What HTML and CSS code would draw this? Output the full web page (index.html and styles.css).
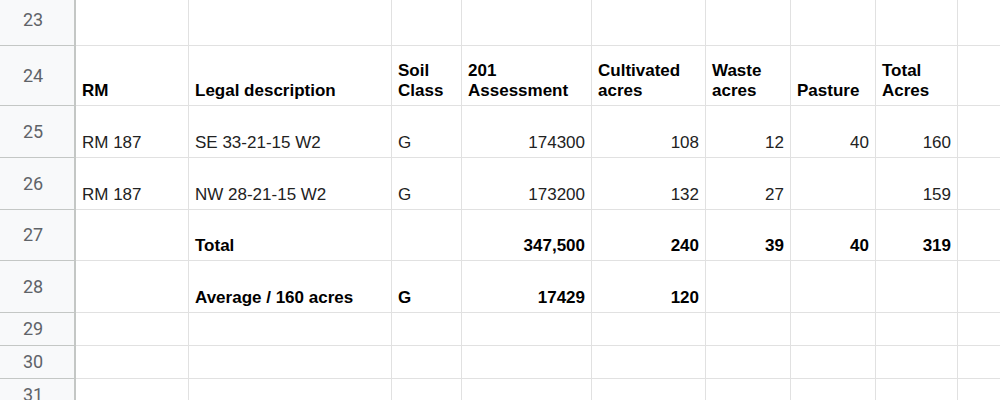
FILE: index.html
```html
<!DOCTYPE html>
<html lang="en">
<head>
<meta charset="utf-8">
<title>Sheet</title>
<link rel="stylesheet" href="styles.css">
</head>
<body>
<div class="sheet">
  <div class="rh">23</div><div class="c"></div><div class="c"></div><div class="c"></div><div class="c"></div><div class="c"></div><div class="c"></div><div class="c"></div><div class="c"></div><div class="c"></div>

  <div class="rh">24</div>
  <div class="c b">RM</div>
  <div class="c b">Legal description</div>
  <div class="c b">Soil Class</div>
  <div class="c b">201 Assessment</div>
  <div class="c b">Cultivated acres</div>
  <div class="c b">Waste acres</div>
  <div class="c b">Pasture</div>
  <div class="c b">Total Acres</div>
  <div class="c"></div>

  <div class="rh">25</div>
  <div class="c">RM 187</div>
  <div class="c">SE 33-21-15 W2</div>
  <div class="c">G</div>
  <div class="c n">174300</div>
  <div class="c n">108</div>
  <div class="c n">12</div>
  <div class="c n">40</div>
  <div class="c n">160</div>
  <div class="c"></div>

  <div class="rh">26</div>
  <div class="c">RM 187</div>
  <div class="c">NW 28-21-15 W2</div>
  <div class="c">G</div>
  <div class="c n">173200</div>
  <div class="c n">132</div>
  <div class="c n">27</div>
  <div class="c n"></div>
  <div class="c n">159</div>
  <div class="c"></div>

  <div class="rh">27</div>
  <div class="c"></div>
  <div class="c b">Total</div>
  <div class="c"></div>
  <div class="c n b">347,500</div>
  <div class="c n b">240</div>
  <div class="c n b">39</div>
  <div class="c n b">40</div>
  <div class="c n b">319</div>
  <div class="c"></div>

  <div class="rh">28</div>
  <div class="c"></div>
  <div class="c b">Average / 160 acres</div>
  <div class="c b">G</div>
  <div class="c n b">17429</div>
  <div class="c n b">120</div>
  <div class="c"></div>
  <div class="c"></div>
  <div class="c"></div>
  <div class="c"></div>

  <div class="rh">29</div><div class="c"></div><div class="c"></div><div class="c"></div><div class="c"></div><div class="c"></div><div class="c"></div><div class="c"></div><div class="c"></div><div class="c"></div>
  <div class="rh">30</div><div class="c"></div><div class="c"></div><div class="c"></div><div class="c"></div><div class="c"></div><div class="c"></div><div class="c"></div><div class="c"></div><div class="c"></div>
  <div class="rh">31</div><div class="c"></div><div class="c"></div><div class="c"></div><div class="c"></div><div class="c"></div><div class="c"></div><div class="c"></div><div class="c"></div><div class="c"></div>
</div>
</body>
</html>
```

FILE: styles.css
```css
html, body {
  margin: 0;
  padding: 0;
  background: #ffffff;
  overflow: hidden;
}

.sheet {
  margin: -6px 0 0 -8px;
  display: grid;
  grid-template-columns: 84px 113px 203px 70px 130px 114px 85px 85px 82px 110px;
  grid-template-rows: 52px 60px 52px 52px 51px 52px 33px 33px 33px;
  font-family: "Liberation Sans", Arial, sans-serif;
  font-size: 17px;
  line-height: 20px;
  color: #222222;
}

.rh {
  display: flex;
  align-items: center;
  justify-content: center;
  background: #f8f9fa;
  border-right: 2px solid #c4c7c5;
  border-bottom: 1px solid #c4c7c5;
  font-family: Roboto, "Liberation Sans", sans-serif;
  font-size: 18px;
  color: #5f6368;
}

.c {
  display: flex;
  align-items: flex-end;
  padding: 0 6px 4px 6px;
  border-right: 1px solid #e1e1e1;
  border-bottom: 1px solid #e1e1e1;
  overflow: hidden;
}

.n {
  justify-content: flex-end;
  text-align: right;
}

.b {
  font-weight: bold;
  color: #000000;
}
```
